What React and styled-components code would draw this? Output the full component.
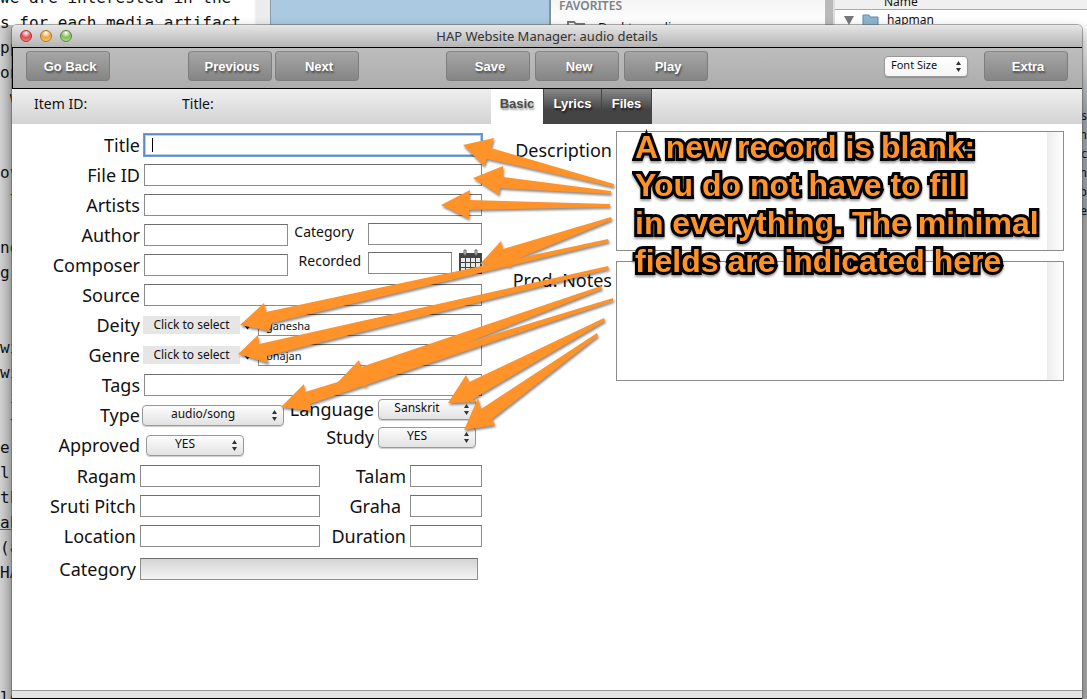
import React from "react";
import styled, { createGlobalStyle, css } from "styled-components";

const ui = `"Noto Sans", "Open Sans", sans-serif`;
const helv = `"Liberation Sans", Arial, sans-serif`;

const Global = createGlobalStyle`
  *, *::before, *::after { box-sizing: border-box; }
  html, body { margin: 0; height: 100%; overflow: hidden; }
  #root { height: 100%; }
  body { font-family: ${ui}; color: #111; }
  button, input, select, textarea { font: inherit; color: inherit; margin: 0; }
`;

const Desktop = styled.div`
  position: relative;
  min-height: 100%;
  height: 100%;
  overflow: hidden;
  display: flex;
  background: #abc9e0;
`;

/* ---------- windows behind ---------- */
const Editor = styled.section`
  width: 271px;
  flex: none;
  background: linear-gradient(90deg, #d2d2d2 0, #b4b4b4 12px, #f4f4f4 13px);
  border-right: 1px solid #8a9aa6;
  position: relative;
`;
const EditorTop = styled.div`
  position: absolute;
  inset: 0 0 auto 0;
  height: 25px;
  background: linear-gradient(90deg, #fff 254px, #ececec 256px);
`;
const EditorText = styled.pre`
  position: relative;
  margin: -15px 0 0;
  font: 16px/25px "DejaVu Sans Mono", monospace;
  color: #111;
  u { text-decoration-color: #d33; }
`;
const Gap = styled.div`
  width: 278px;
  flex: none;
`;
const Finder = styled.section`
  flex: 1;
  min-width: 0;
  display: flex;
  background: #a6a6a6;
  border-left: 2px solid #84929c;
  line-height: 16px;
`;
const Sidebar = styled.div`
  width: 274px;
  flex: none;
  background: linear-gradient(180deg, #f4f4f4, #fdfdfd 20px);
  padding: 0 8px;
  font-size: 12px;
`;
const SideTitle = styled.div`
  font-size: 12px;
  font-weight: 600;
  line-height: 12px;
  color: #7b828a;
`;
const SideItem = styled.div`
  display: flex;
  align-items: center;
  gap: 13px;
  padding: 7px 8px;
  font-size: 13px;
`;
const Divider = styled.div`
  width: 10px;
  flex: none;
  background: #b9b9b9;
  border-right: 2px solid #ddd;
`;
const FileList = styled.div`
  flex: 1;
  min-width: 0;
  background: linear-gradient(180deg, #fff 24px, #d8d8d8 60px, #9fa6ac 110px, #9a9fa3 216px, #a6a6a6 217px);
  font-size: 12px;
`;
const ListHead = styled.div`
  height: 10px;
  line-height: 4px;
  padding-left: 49px;
  background: #f0f0f0;
  border-bottom: 1px solid #aaa;
`;
const ListRow = styled.div`
  display: flex;
  align-items: center;
  gap: 8px;
  padding: 2px 0 0 9px;
`;
const Peek = styled.div`
  padding: 78px 0 0;
  text-align: right;
  font-size: 12px;
  line-height: 19px;
`;

/* ---------- main window ---------- */
const Window = styled.main`
  position: absolute;
  inset: 25px 5px 0 12px;
  display: flex;
  flex-direction: column;
  background: #fff;
  border-radius: 5px 5px 0 0;
  box-shadow: 0 0 0 1px rgba(90, 90, 90, 0.5), 0 4px 12px rgba(0, 0, 0, 0.3);
`;
const TitleBar = styled.header`
  height: 22px;
  flex: none;
  display: flex;
  align-items: center;
  background: linear-gradient(#e6e6e6, #b4b4b4);
  border-radius: 5px 5px 0 0;
  padding: 0 8px;
`;
const Lights = styled.div`
  flex: 1;
  display: flex;
  gap: 8px;
`;
const Light = styled.button`
  width: 12px;
  height: 12px;
  padding: 0;
  border: 1px solid ${(p) => p.$edge};
  border-radius: 50%;
  background: radial-gradient(circle at 50% 20%, #fff 0, ${(p) => p.$fill} 50%, ${(p) => p.$glow} 100%);
`;
const WindowTitle = styled.h1`
  margin: 0;
  font-size: 13px;
  font-weight: 400;
  line-height: 20px;
  color: #333;
`;
const Toolbar = styled.nav`
  height: 42px;
  flex: none;
  display: flex;
  align-items: flex-start;
  padding: 3px 14px 0 13px;
  border: 1px solid #000;
  border-right: 0;
  background: linear-gradient(#bdbdbd, #adadad);
`;
const ToolGroup = styled.div`
  display: flex;
  align-items: center;
  gap: ${(p) => p.$gap || 4}px;
  margin-left: ${(p) => p.$lead || 0};
`;
const ToolButton = styled.button`
  width: 84px;
  height: 30px;
  padding: 0 0 0 4px;
  border: 1px solid #7d7d7d;
  border-top-color: #888;
  border-radius: 4px;
  background: linear-gradient(#a6a6a6, #858585);
  font: bold 13px/30px ${helv};
  color: #fff;
  text-shadow: 1px 2px 2px rgba(0, 0, 0, 0.5);
`;
const InfoBar = styled.div`
  height: 35px;
  flex: none;
  display: flex;
  background: linear-gradient(#efefef, #d3d3d3);
  font-size: 14px;
  line-height: 30px;
`;
const InfoItem = styled.div`
  width: ${(p) => p.$w}px;
  padding-left: 22px;
`;
const Tabs = styled.div`
  display: flex;
`;
const Tab = styled.button`
  width: ${(p) => p.$w}px;
  padding: 0 0 6px;
  border: 0;
  border-right: 1px solid #444;
  background: linear-gradient(#8a8a8a, #444 60%);
  font: bold 13px/28px ${helv};
  color: #fff;
  text-shadow: 1px 2px 2px rgba(0, 0, 0, 0.6);
  ${(p) => p.$on && css`
    background: #fff;
    color: #4c4c4c;
    text-shadow: 1px 2px 2px rgba(0, 0, 0, 0.4);
  `}
`;

const Content = styled.form`
  flex: 1;
  display: flex;
  align-items: flex-start;
  padding: 6px 18px 0 0;
`;
const Fields = styled.div`
  width: 470px;
  flex: none;
`;
const Row = styled.div`
  display: flex;
  align-items: center;
  height: ${(p) => p.$h || 30}px;
`;
const Columns = styled.div`
  display: flex;
`;
const LowerFields = styled.div`
  padding-top: 1px;
`;
const Column = styled.div`
  flex: ${(p) => (p.$grow ? 1 : "none")};
  min-width: 0;
  margin-top: ${(p) => (p.$raise ? -p.$raise : 0)}px;
`;
const Label = styled.label`
  width: ${(p) => p.$w || 128}px;
  margin-right: ${(p) => (p.$gap === undefined ? 4 : p.$gap)}px;
  flex: none;
  text-align: right;
  white-space: nowrap;
  font-size: 18px;
  line-height: 22px;
  ${(p) => p.$small && css`
    font-size: 14px;
    padding-bottom: 4px;
  `}
`;
const Box = styled.input`
  ${(p) => (p.$w ? `width: ${p.$w}px; flex: none;` : "flex: 1; min-width: 0;")}
  height: 22px;
  padding: 0 7px;
  border: 1px solid #8c8c8c;
  border-top-color: #6e6e6e;
  border-radius: 0;
  background: #fff;
  font-size: 11px;
  outline: 0;
  ${(p) => p.$active && css`
    border-color: #5b8cc4;
    box-shadow: 0 0 0 1px #6f9fd6, inset 0 0 0 1px #b7d0ec;
  `}
  ${(p) => p.$shaded && css`
    background: linear-gradient(#d4d4d4, #f4f4f4);
    margin-right: 4px;
  `}
`;
const Caret = styled.span`
  width: 1px;
  height: 14px;
  margin: 0 -9px 0 8px;
  background: #000;
  z-index: 1;
`;
const SelectWrap = styled.span`
  position: relative;
  display: block;
  width: ${(p) => p.$w}px;
  svg {
    position: absolute;
    right: 6px;
    top: 5px;
    pointer-events: none;
  }
`;
const SelectBox = styled.select`
  appearance: none;
  display: block;
  width: 100%;
  height: 21px;
  padding: 0 20px 2px ${(p) => (p.$left ? 6 : 0)}px;
  border: 1px solid #999;
  border-radius: 4px;
  background: ${(p) => (p.$left ? "linear-gradient(#fff, #f6f6f6)" : "linear-gradient(#fdfdfd, #e2e2e2)")};
  box-shadow: 0 1px 1px rgba(0, 0, 0, 0.2);
  font-size: ${(p) => (p.$left ? 11 : 12)}px;
  line-height: 16px;
  text-align: ${(p) => (p.$left ? "left" : "center")};
  text-align-last: ${(p) => (p.$left ? "left" : "center")};
`;
const Chooser = styled.button`
  width: 97px;
  height: 18px;
  padding: 0;
  border: 0;
  background: #e6e6e6;
  font-size: 12px;
  line-height: 18px;
`;
const Marker = styled.span`
  width: 9px;
  height: 9px;
  margin: 0 6px 0 3px;
  background: #14145c;
  clip-path: polygon(0 40%, 100% 40%, 50% 100%);
`;
const CalendarButton = styled.button`
  width: 23px;
  height: 26px;
  margin: 0 0 2px 7px;
  padding: 0;
  border: 0;
  background: none;
`;
const Notes = styled.div`
  flex: 1;
  min-width: 0;
  display: flex;
  flex-direction: column;
  gap: 10px;
  padding-top: 1px;
`;
const NoteRow = styled.div`
  display: flex;
  align-items: flex-start;
  label { margin-top: 8px; }
`;
const NoteArea = styled.textarea`
  flex: 1;
  min-width: 0;
  height: 120px;
  padding: 4px 20px 4px 4px;
  resize: none;
  border: 1px solid #8c8c8c;
  border-radius: 0;
  background: linear-gradient(90deg, #ededed, #fefefe) right / 16px 100% no-repeat, #fff;
  font-size: 12px;
  outline: 0;
`;
const StatusBar = styled.footer`
  height: 9px;
  flex: none;
  border-top: 1px solid #999;
  border-bottom: 1px solid #000;
  background: #e4e4e4;
`;

/* ---------- annotation layer ---------- */
const Arrows = styled.svg`
  position: absolute;
  left: 0;
  top: 0;
  pointer-events: none;
  filter: drop-shadow(1px 2px 1px rgba(0, 0, 0, 0.45));
`;
const Callout = styled.p`
  position: absolute;
  left: 635px;
  top: 128px;
  margin: 0;
  white-space: nowrap;
  pointer-events: none;
  font: bold 32px/38px ${helv};
  color: #ff9228;
  -webkit-text-stroke: 6px #000;
  paint-order: stroke fill;
  stroke-linejoin: round;
  filter: drop-shadow(0 2px 1px rgba(0, 0, 0, 0.4));
`;

const arrows = [
  "463,145 494,138 491,148 614,184 613,187 487,159 484,166",
  "473,178 503,166 503,177 611,191 611,194 500,188 499,195",
  "441,205 470,190 469,200 610,204 610,207 469,210 469,219",
  "480,264 501,241 503,249 611,217 612,220 507,263 512,267",
  "240,325 264,303 266,312 608,239 609,242 272,323 269,331",
  "238,354 258,335 259,344 608,266 609,269 267,356 268,363",
  "337,383 359,360 361,367 601,286 602,289 363,384 368,387",
  "281,407 304,384 305,392 613,298 613,301 310,404 311,411",
  "448,403 466,375 469,382 604,318 605,321 473,399 477,402",
  "464,430 478,398 481,409 597,333 598,336 492,419 495,425",
];

const editorLines = [
  "we are interested in the", "s for each media artifact", "pp", "on", " w", "", "",
  "ov", " t", " r", "nd", "g", "", "", "wi", "wi", " i", " t", "e", "l.", "th",
];

function Select({ id, w, left, value, label }) {
  return (
    <SelectWrap $w={w}>
      <SelectBox id={id} $left={left} aria-label={label} defaultValue={value}>
        <option>{value}</option>
      </SelectBox>
      <svg width="7" height="11" viewBox="0 0 7 11" fill="#333">
        <path d="M3.5 0 6 4H1zM3.5 11 1 7h5z" />
      </svg>
    </SelectWrap>
  );
}

function Field({ id, label, w, labelW, gap, small, active, shaded, value }) {
  return (
    <>
      <Label htmlFor={id} $w={labelW} $gap={gap} $small={small}>{label}</Label>
      {active && <Caret />}
      <Box id={id} $w={w} $active={active} $shaded={shaded} defaultValue={value} />
    </>
  );
}

function Choice({ id, label, value }) {
  return (
    <Row>
      <Label htmlFor={id} $gap={3}>{label}</Label>
      <Chooser type="button">Click to select</Chooser>
      <Marker />
      <Box id={id} defaultValue={value} />
    </Row>
  );
}

function CalendarIcon() {
  return (
    <svg width="23" height="26" viewBox="0 0 23 26">
      <path d="M0 4h23v21H0z" fill="#444" />
      <path d="M5 1h2v5H5zM16 1h2v5h-2z" fill="#ddd" stroke="#666" />
      <g fill="#e9e9e9">
        {[9, 14, 19].map((y) => [2, 7, 12, 17].map((x) => (
          <rect key={`${x}-${y}`} x={x} y={y} width="4" height="4" />
        )))}
      </g>
    </svg>
  );
}

export default function App() {
  return (
    <>
      <Global />
      <Desktop>
        <Editor>
          <EditorTop />
          <EditorText>
            {editorLines.join("\n")}{"\n"}
            <u>ah</u>{"\n(a\nHA\n\n\n\n\nle"}
          </EditorText>
        </Editor>
        <Gap />
        <Finder>
          <Sidebar>
            <SideTitle>FAVORITES</SideTitle>
            <SideItem>
              <svg width="18" height="14" viewBox="0 0 18 14" fill="none" stroke="#777" strokeWidth="2">
                <path d="M1 13V2h6l2 2h8v9z" />
              </svg>
              Desktop-adi
            </SideItem>
          </Sidebar>
          <Divider />
          <FileList>
            <ListHead>Name</ListHead>
            <ListRow>
              <svg width="10" height="9" viewBox="0 0 10 9"><path d="M0 0h10L5 9z" fill="#777" /></svg>
              <svg width="17" height="14" viewBox="0 0 17 14">
                <path d="M1 2h6l1 2h8v10H1z" fill="#8db4d0" stroke="#6289a6" />
              </svg>
              hapman
            </ListRow>
            <Peek>js<br />in<br />c<br />in<br />p<br />e</Peek>
          </FileList>
        </Finder>

        <Window>
          <TitleBar>
            <Lights>
              <Light type="button" aria-label="Close" $edge="#a33" $fill="#e2484c" $glow="#ff9c98" />
              <Light type="button" aria-label="Minimize" $edge="#a9762a" $fill="#eda33a" $glow="#ffe08a" />
              <Light type="button" aria-label="Zoom" $edge="#56853a" $fill="#83bd5c" $glow="#cdf0a8" />
            </Lights>
            <WindowTitle>HAP Website Manager: audio details</WindowTitle>
            <Lights />
          </TitleBar>
          <Toolbar>
            <ToolButton type="button">Go Back</ToolButton>
            <ToolGroup $lead="78px" $gap={3}>
              <ToolButton type="button">Previous</ToolButton>
              <ToolButton type="button">Next</ToolButton>
            </ToolGroup>
            <ToolGroup $lead="87px" $gap={5}>
              <ToolButton type="button">Save</ToolButton>
              <ToolButton type="button">New</ToolButton>
              <ToolButton type="button">Play</ToolButton>
            </ToolGroup>
            <ToolGroup $lead="auto" $gap={16}>
              <Select w={84} left value="Font Size" label="Font size" />
              <ToolButton type="button">Extra</ToolButton>
            </ToolGroup>
          </Toolbar>
          <InfoBar>
            <InfoItem $w={148}>Item ID:</InfoItem>
            <InfoItem $w={331}>Title:</InfoItem>
            <Tabs>
              <Tab type="button" $w={53} $on>Basic</Tab>
              <Tab type="button" $w={58}>Lyrics</Tab>
              <Tab type="button" $w={50}>Files</Tab>
            </Tabs>
          </InfoBar>

          <Content>
            <Fields>
              <Row><Field id="title" label="Title" active /></Row>
              <Row><Field id="file-id" label="File ID" /></Row>
              <Row><Field id="artists" label="Artists" /></Row>
              <Columns>
                <Column>
                  <Row><Field id="author" label="Author" w={144} /></Row>
                  <Row><Field id="composer" label="Composer" w={144} /></Row>
                </Column>
                <Column $grow $raise={1}>
                  <Row><Field id="category" label="Category" labelW={66} gap={14} small /></Row>
                  <Row $h={28}>
                    <Field id="recorded" label="Recorded" labelW={73} gap={7} w={84} small />
                    <CalendarButton type="button" aria-label="Pick a date"><CalendarIcon /></CalendarButton>
                  </Row>
                </Column>
              </Columns>
              <Row><Field id="source" label="Source" /></Row>
              <Choice id="deity" label="Deity" value="ganesha" />
              <Choice id="genre" label="Genre" value="bhajan" />
              <Row><Field id="tags" label="Tags" /></Row>
              <Columns>
                <Column>
                  <Row><Label htmlFor="type" $gap={2}>Type</Label><Select id="type" w={142} value="audio/song" /></Row>
                  <Row><Label htmlFor="approved" $gap={6}>Approved</Label><Select id="approved" w={98} value="YES" /></Row>
                </Column>
                <Column $raise={5}>
                  <Row $h={28}><Label htmlFor="language" $w={90}>Language</Label><Select id="language" w={98} value="Sanskrit" /></Row>
                  <Row $h={28}><Label htmlFor="study" $w={90}>Study</Label><Select id="study" w={98} value="YES" /></Row>
                </Column>
              </Columns>
              <LowerFields>
                <Row>
                  <Field id="ragam" label="Ragam" labelW={124} w={180} />
                  <Field id="talam" label="Talam" labelW={86} />
                </Row>
                <Row>
                  <Field id="pitch" label="Sruti Pitch" labelW={124} w={180} />
                  <Field id="graha" label="Graha" labelW={81} gap={9} />
                </Row>
                <Row>
                  <Field id="location" label="Location" labelW={124} w={180} />
                  <Field id="duration" label="Duration" labelW={86} />
                </Row>
                <Row $h={36}><Field id="category-all" label="Category" labelW={124} shaded /></Row>
              </LowerFields>
            </Fields>
            <Notes>
              <NoteRow>
                <Label htmlFor="description" $w={130}>Description</Label>
                <NoteArea id="description" />
              </NoteRow>
              <NoteRow>
                <Label htmlFor="prod-notes" $w={130}>Prod. Notes</Label>
                <NoteArea id="prod-notes" />
              </NoteRow>
            </Notes>
          </Content>
          <StatusBar />
        </Window>

        <Arrows width="640" height="450" viewBox="0 0 640 450">
          {arrows.map((points) => (
            <polygon key={points} points={points} fill="#ff9228" />
          ))}
        </Arrows>
        <Callout>
          A new record is blank:<br />
          You do not have to fill<br />
          in everything. The minimal<br />
          fields are indicated here
        </Callout>
      </Desktop>
    </>
  );
}
